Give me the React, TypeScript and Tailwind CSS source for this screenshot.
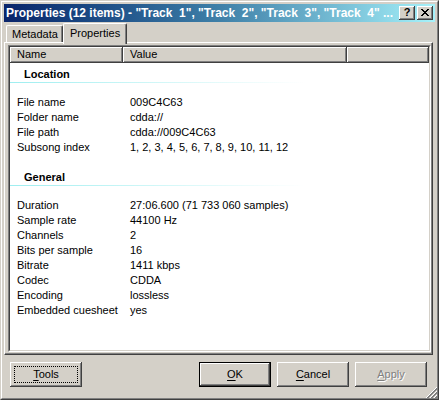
import React from "react";

const raised =
  "shadow-[inset_-1px_-1px_0_#404040,inset_1px_1px_0_#ffffff,inset_-2px_-2px_0_#808080]";

const location: [string, string][] = [
  ["File name", "009C4C63"],
  ["Folder name", "cdda://"],
  ["File path", "cdda://009C4C63"],
  ["Subsong index", "1, 2, 3, 4, 5, 6, 7, 8, 9, 10, 11, 12"],
];

const general: [string, string][] = [
  ["Duration", "27:06.600 (71 733 060 samples)"],
  ["Sample rate", "44100 Hz"],
  ["Channels", "2"],
  ["Bits per sample", "16"],
  ["Bitrate", "1411 kbps"],
  ["Codec", "CDDA"],
  ["Encoding", "lossless"],
  ["Embedded cuesheet", "yes"],
];

function CloseGlyph() {
  const px = [
    [0, 0], [1, 0], [6, 0], [7, 0],
    [1, 1], [2, 1], [5, 1], [6, 1],
    [2, 2], [3, 2], [4, 2], [5, 2],
    [3, 3], [4, 3],
    [2, 4], [3, 4], [4, 4], [5, 4],
    [1, 5], [2, 5], [5, 5], [6, 5],
    [0, 6], [1, 6], [6, 6], [7, 6],
  ];
  return (
    <svg width="8" height="7" viewBox="0 0 8 7" shapeRendering="crispEdges">
      {px.map(([x, y]) => (
        <rect key={`${x}-${y}`} x={x} y={y} width="1" height="1" fill="#000" />
      ))}
    </svg>
  );
}

function SizeGrip() {
  const white = [1, 5, 9];
  const gray = [2, 3, 6, 7, 10, 11];
  return (
    <svg width="12" height="12" viewBox="0 0 12 12" shapeRendering="crispEdges">
      {white.map((s) => (
        <line key={`w${s}`} x1={12} y1={s} x2={s} y2={12} stroke="#ffffff" strokeWidth="1" />
      ))}
      {gray.map((s) => (
        <line key={`g${s}`} x1={12} y1={s} x2={s} y2={12} stroke="#808080" strokeWidth="1" />
      ))}
    </svg>
  );
}

function Group({ title, rows, first }: { title: string; rows: [string, string][]; first?: boolean }) {
  return (
    <div className={first ? "" : "mt-[15px]"}>
      <div className="h-[15px] leading-[15px] pl-[14px] font-bold">{title}</div>
      <div className="h-px w-[295px] bg-gradient-to-r from-[#9eeef0] to-white" />
      <div className="mt-[12px]">
        {rows.map(([k, v]) => (
          <div key={k} className="flex h-[15px] leading-[15px]">
            <div className="w-[113px] pl-[7px] whitespace-nowrap">{k}</div>
            <div className="pl-[7px] whitespace-nowrap">{v}</div>
          </div>
        ))}
      </div>
    </div>
  );
}

function PushButton({
  children,
  isDefault,
  focused,
  disabled,
}: {
  children: React.ReactNode;
  isDefault?: boolean;
  focused?: boolean;
  disabled?: boolean;
}) {
  return (
    <div
      className={`relative w-[72px] h-[25px] bg-[#d4d0c8] ${isDefault ? "border border-black" : ""}`}
    >
      <div
        className={`w-full h-full flex items-center justify-center ${raised} ${
          disabled ? "text-[#808080] [text-shadow:1px_1px_0_#ffffff]" : "text-black"
        }`}
      >
        {children}
      </div>
      {focused && <div className="absolute inset-[4px] border border-dotted border-black" />}
    </div>
  );
}

export default function App() {
  return (
    <div className="w-[439px] h-[400px] font-['Liberation_Sans',Arial,sans-serif] text-[11px] text-black">
      <div className="w-full h-full border border-t-[#d4d0c8] border-l-[#d4d0c8] border-r-[#404040] border-b-[#404040]">
        <div className="w-full h-full border border-t-white border-l-white border-r-[#808080] border-b-[#808080] bg-[#d4d0c8] p-[2px] flex flex-col relative">
          {/* caption */}
          <div className="h-[18px] flex items-center pl-[2px] pr-[2px] bg-gradient-to-r from-[#0a246a] via-[#3f80a8] to-[#a6f2fa]">
            <div className="flex-1 text-white font-bold text-[12px] whitespace-pre overflow-hidden">
              {'Properties (12 items) - "Track  1", "Track  2", "Track  3", "Track  4" ...'}
            </div>
            <div className="flex gap-[2px]">
              <div className={`w-[16px] h-[14px] bg-[#d4d0c8] ${raised} flex items-center justify-center font-bold text-[11px] leading-none pb-px`}>
                ?
              </div>
              <div className={`w-[16px] h-[14px] bg-[#d4d0c8] ${raised} flex items-center justify-center pb-px`}>
                <CloseGlyph />
              </div>
            </div>
          </div>

          {/* tabs */}
          <div className="mt-px h-[20px] flex items-end pl-[2px]">
            <div className="w-[57px] h-[18px] border-l border-t border-white border-r border-r-[#404040] shadow-[inset_-1px_0_0_#808080] rounded-tl-[2px] rounded-tr-[2px] flex items-center pl-[5px] pb-px">
              Metadata
            </div>
            <div className="relative z-10 w-[64px] h-[21px] -mb-px bg-[#d4d0c8] border-l border-t border-white border-r border-r-[#404040] shadow-[inset_-1px_0_0_#808080] rounded-tl-[2px] rounded-tr-[2px] flex items-center pl-[6px] pb-[2px]">
              Properties
            </div>
          </div>

          {/* panel */}
          <div className="relative -mt-px w-[429px] h-[313px] bg-[#d4d0c8] border-l border-t border-white border-r border-b border-r-[#404040] border-b-[#404040] shadow-[inset_-1px_-1px_0_#808080] pl-[3px] pt-[2px]">
            <div className="w-[423px] h-[307px] border border-t-[#808080] border-l-[#808080] border-r-white border-b-white">
              <div className="w-full h-full border border-t-[#404040] border-l-[#404040] border-r-[#d4d0c8] border-b-[#d4d0c8] bg-white overflow-hidden">
                <div className="flex h-[16px] bg-[#d4d0c8]">
                  <div className={`w-[113px] h-full ${raised} pl-[7px] leading-[15px]`}>Name</div>
                  <div className={`w-[224px] h-full ${raised} pl-[7px] leading-[15px]`}>Value</div>
                  <div className={`flex-1 h-full ${raised}`} />
                </div>
                <div className="pt-[4px]">
                  <Group title="Location" rows={location} first />
                  <Group title="General" rows={general} />
                </div>
              </div>
            </div>
          </div>

          {/* buttons */}
          <div className="mt-[7px] flex items-center pl-[6px] pr-[8px]">
            <PushButton focused>
              <span>
                <span className="underline underline-offset-2">T</span>ools
              </span>
            </PushButton>
            <div className="flex-1" />
            <div className="flex gap-[6px]">
              <PushButton isDefault>
                <span>
                  <span className="underline underline-offset-2">O</span>K
                </span>
              </PushButton>
              <PushButton>
                <span>
                  <span className="underline underline-offset-2">C</span>ancel
                </span>
              </PushButton>
              <PushButton disabled>
                <span>
                  <span className="underline underline-offset-2">A</span>pply
                </span>
              </PushButton>
            </div>
          </div>

          <div className="absolute right-0 bottom-0">
            <SizeGrip />
          </div>
        </div>
      </div>
    </div>
  );
}
